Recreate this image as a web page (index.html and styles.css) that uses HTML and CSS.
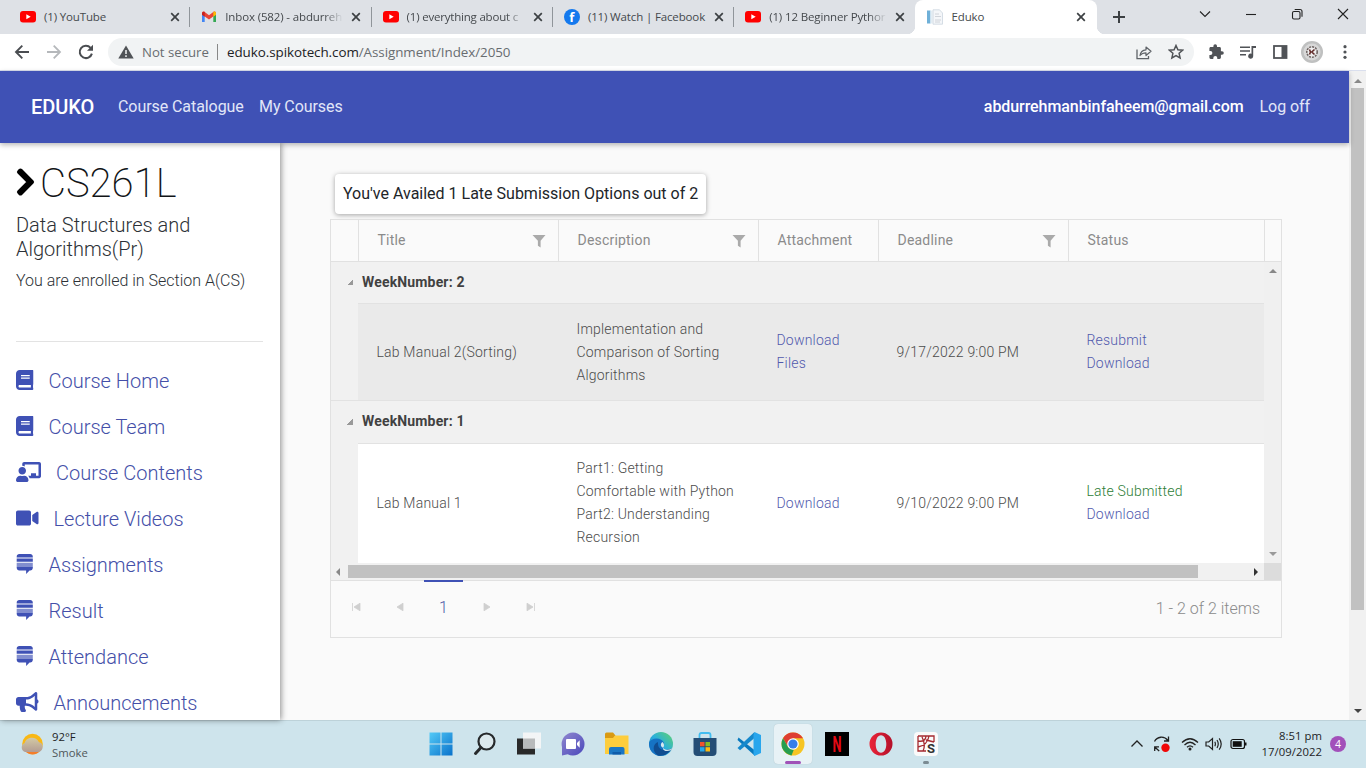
FILE: index.html
```html
<!DOCTYPE html>
<html lang="en">
<head>
<meta charset="utf-8">
<title>Eduko</title>
<link rel="stylesheet" href="styles.css">
</head>
<body>
<svg class="defs" aria-hidden="true">
  <defs>
    <symbol id="close" viewBox="0 0 10 10"><path d="M1.2 1.2l7.600 7.600M8.800 1.200l-7.600 7.600" stroke="#3c4043" stroke-width="1.700" fill="none"/></symbol>
    <symbol id="youtube" viewBox="0 0 16 12"><rect width="16" height="11.500" rx="3" fill="#f00"/><path d="M6.300 3.300l4.400 2.450-4.400 2.450z" fill="#fff"/></symbol>
    <symbol id="book" viewBox="0 0 448 512"><path d="M448 360V24c0-13.300-10.700-24-24-24H96C43 0 0 43 0 96v320c0 53 43 96 96 96h328c13.300 0 24-10.700 24-24v-16c0-7.500-3.500-14.300-8.900-18.700-4.200-15.400-4.200-59.300 0-74.700 5.400-4.300 8.900-11.100 8.900-18.600zM128 134c0-3.300 2.700-6 6-6h212c3.300 0 6 2.700 6 6v20c0 3.300-2.700 6-6 6H134c-3.300 0-6-2.700-6-6v-20zm0 64c0-3.300 2.700-6 6-6h212c3.300 0 6 2.700 6 6v20c0 3.300-2.700 6-6 6H134c-3.300 0-6-2.700-6-6v-20zm253.400 250H96c-17.700 0-32-14.300-32-32 0-17.600 14.400-32 32-32h285.400c-1.900 17.100-1.900 46.900 0 64z"/></symbol>
    <symbol id="stack" viewBox="0 0 448 512"><path d="M17.700 332.300h412.700v22c0 37.700-29.300 68-65.300 68h-19L259.300 512v-89.700H83c-36 0-65.300-30.300-65.300-68v-22zM17.700 199.300h412.700v-85H17.700v85zM365 0H83C47 0 17.700 30.300 17.700 67.700V90h412.700V67.700C430.300 30.300 401 0 365 0z"/><path d="M17.700 223.700h412.700v108.600H17.700z" opacity=".65"/></symbol>
    <symbol id="filter" viewBox="0 0 14 14"><path d="M.5 1h13L8.600 6.800V13.600L5.900 11.800V6.800z" fill="#aaa"/></symbol>
  </defs>
</svg>

<div class="screen">
  <header class="tabs">
    <div class="tab"><svg class="fav yt"><use href="#youtube"/></svg><span class="tab-name">(1) YouTube</span><svg class="x"><use href="#close"/></svg></div>
    <div class="tab"><svg class="fav" viewBox="0 0 16 16"><path d="M1 4.200v8.800h2.700V6.500z" fill="#4285f4"/><path d="M15 4.200v8.800h-2.700V6.500z" fill="#34a853"/><path d="M1 4.500c0-1.900 1.600-2.300 2.700-1.500L8 6.300 12.300 3c1.100-.8 2.700-.4 2.700 1.500v1L8 10.400 1 5.500z" fill="#ea4335"/><path d="M12.300 3c1.100-.8 2.700-.4 2.700 1.500v1.200l-2.700 2z" fill="#fbbc04"/><path d="M1 4.500C1 3 2.400 2.200 3.700 3v4.700L1 5.700z" fill="#c5221f"/></svg><span class="tab-name fade">Inbox (582) - abdurreh</span><svg class="x"><use href="#close"/></svg></div>
    <div class="tab"><svg class="fav yt"><use href="#youtube"/></svg><span class="tab-name fade tight">(1) everything about c</span><svg class="x"><use href="#close"/></svg></div>
    <div class="tab"><span class="fav fb">f</span><span class="tab-name">(11) Watch | Facebook</span><svg class="x"><use href="#close"/></svg></div>
    <div class="tab last"><svg class="fav yt"><use href="#youtube"/></svg><span class="tab-name fade">(1) 12 Beginner Pythor</span><svg class="x"><use href="#close"/></svg></div>
    <div class="tab active"><svg class="fav" viewBox="0 0 16 16"><path d="M0 1.500h3.500v13H0z" fill="#6fb0d8"/><path d="M3.500 1.500h2v13h-2z" fill="#e2edf4"/><path d="M6 .8h6.500l3 3.200v11.200H6z" fill="#f4f6f9" stroke="#cbd5de" stroke-width=".8"/><path d="M8 5h4M8 7.500h6M8 11h6M8 13h5" stroke="#c6ccd2" stroke-width=".8"/></svg><span class="tab-name">Eduko</span><svg class="x"><use href="#close"/></svg></div>
    <svg class="plus" viewBox="0 0 14 14"><path d="M7 1v12M1 7h12" stroke="#3c4043" stroke-width="2"/></svg>
    <div class="win-controls">
      <svg viewBox="0 0 12 12"><path d="M1 3.500l5 5 5-5" /></svg>
      <svg viewBox="0 0 12 12"><path d="M1 6.500h10" /></svg>
      <svg viewBox="0 0 12 12"><rect x="1.500" y="3.500" width="7.500" height="7.500" rx="1.500"/><path d="M3.700 1.500h5.300a2 2 0 0 1 2 2v5.300"/></svg>
      <svg viewBox="0 0 12 12"><path d="M1 1l10 10M11 1L1 11"/></svg>
    </div>
  </header>

  <div class="toolbar">
    <svg class="nav-ic" viewBox="0 0 16 16"><path d="M15 8H2M8.300 1.700L2 8l6.300 6.300" stroke="#4a4d51" stroke-width="1.900" fill="none"/></svg>
    <svg class="nav-ic" viewBox="0 0 16 16"><path d="M1 8h13M7.700 1.700L14 8l-6.300 6.300" stroke="#b5b8bb" stroke-width="1.800" fill="none"/></svg>
    <svg class="nav-ic" viewBox="0 0 16 16"><path d="M13.900 9.600A6.200 6.200 0 1 1 12.600 3.800" stroke="#4a4d51" stroke-width="2" fill="none"/><path d="M15 .8v6H9z" fill="#4a4d51"/></svg>
    <div class="omnibox">
      <svg class="warn" viewBox="0 0 16 14"><path d="M8 .4L15.700 13.600H.3z" fill="#505357"/><path d="M8 5v4M8 10.300v1.700" stroke="#f1f3f4" stroke-width="1.500"/></svg>
      <span class="insecure">Not secure</span><i class="url-sep"></i>
      <span class="url"><b>eduko.spikotech.com</b>/Assignment/Index/2050</span>
      <svg class="share" viewBox="0 0 16 16"><path d="M1 5.500V14.700h11.500V12" stroke="#5f6368" stroke-width="1.300" fill="none"/><path d="M4 11.500c.5-4 2.700-5.500 6-5.700V3l5 4.300-5 4.200V8.800c-2.700 0-4.500.8-6 2.700z" stroke="#5f6368" stroke-width="1.200" fill="none" stroke-linejoin="round"/></svg>
      <svg class="star" viewBox="0 0 16 16"><path d="M8 1.500l1.900 4.300 4.700.4-3.500 3.100 1 4.600L8 11.500l-4.100 2.400 1-4.600L1.400 6.200l4.700-.4z" stroke="#505357" stroke-width="1.500" fill="none"/></svg>
    </div>
    <svg class="tool first" viewBox="0 0 16 16"><path d="M14 7.200h-1.100V4.500c0-.8-.6-1.400-1.400-1.400H9V2a1.800 1.800 0 0 0-3.600 0v1.100H2.800c-.8 0-1.400.6-1.400 1.400v2.400h1a2 2 0 0 1 0 4h-1v2.700c0 .8.600 1.400 1.400 1.400h2.500v-1a2 2 0 0 1 4 0v1h2.200c.8 0 1.400-.6 1.400-1.400v-2.800H14a1.800 1.800 0 0 0 0-3.600z" fill="#505357"/></svg>
    <svg class="tool" viewBox="0 0 16 16"><path d="M0 3.200h10M0 7h10M0 10.800h6" stroke="#505357" stroke-width="1.600"/><path d="M11.500 2H16v2h-2.800v8.200a2.500 2.500 0 1 1-1.700-2.400z" fill="#505357"/></svg>
    <svg class="tool" viewBox="0 0 16 16"><rect x="2" y="2" width="12.500" height="12" fill="none" stroke="#505357" stroke-width="1.800"/><path d="M9.500 2H15v12H9.500z" fill="#505357"/></svg>
    <svg class="avatar" viewBox="0 0 22 22"><circle cx="11" cy="11" r="11" fill="#bfc0c0"/><circle cx="11" cy="11" r="8.500" fill="#d8d8d8"/><circle cx="11" cy="11" r="5.200" fill="#eee" stroke="#6a5f5d" stroke-width="1.500" stroke-dasharray="2 1"/><path d="M8.500 8.500l1 2.500-1 2.500M13.500 8.500l-2.700 2.500 2.700 2.500" stroke="#632c2a" stroke-width="1.600" fill="none"/></svg>
    <svg class="dots" viewBox="0 0 4 16"><g fill="#505357"><circle cx="2" cy="2.700" r="1.600"/><circle cx="2" cy="8" r="1.600"/><circle cx="2" cy="13.300" r="1.600"/></g></svg>
  </div>

  <div class="viewport">
    <div class="page">
      <nav class="navbar">
        <span class="brand">EDUKO</span><a class="l1">Course Catalogue</a><a class="l2">My Courses</a>
        <span class="user">abdurrehmanbinfaheem@gmail.com</span><a class="logoff">Log off</a>
      </nav>
      <div class="columns">
        <aside class="sidebar">
          <h1><svg viewBox="0 0 320 512"><path d="M285.476 272.971L91.132 467.314c-9.373 9.373-24.569 9.373-33.941 0l-22.667-22.667c-9.357-9.357-9.375-24.522-.04-33.901L188.505 256 34.484 101.255c-9.335-9.379-9.317-24.544.04-33.901l22.667-22.667c9.373-9.373 24.569-9.373 33.941 0L285.475 239.030c9.373 9.372 9.373 24.568.001 33.941z" stroke="#000" stroke-width="26"/></svg><span>CS261L</span></h1>
          <p class="course">Data Structures and<br>Algorithms(Pr)</p>
          <p class="section">You are enrolled in Section A(CS)</p>
          <div class="menu">
            <a><svg class="w17"><use href="#book"/></svg><span>Course Home</span></a>
            <a><svg class="w17"><use href="#book"/></svg><span>Course Team</span></a>
            <a><svg class="w25" viewBox="0 0 640 512"><path d="M208 352c-2.390 0-4.780.35-7.060 1.090C187.980 357.300 174.350 360 160 360c-14.350 0-27.980-2.700-40.950-6.910-2.280-.74-4.660-1.090-7.050-1.090C49.940 352-.33 402.480 0 464.620.14 490.880 21.730 512 48 512h224c26.270 0 47.860-21.120 48-47.380.33-62.140-49.940-112.620-112-112.620zm-48-32c53.020 0 96-42.980 96-96s-42.980-96-96-96-96 42.980-96 96 42.980 96 96 96zM592 0H208c-26.470 0-48 22.250-48 49.590V96c23.420 0 45.100 6.780 64 17.800V64h352v288h-64v-64H384v64h-76.240c19.100 16.690 33.120 38.730 39.690 64H592c26.470 0 48-22.250 48-49.590V49.590C640 22.250 618.470 0 592 0z"/></svg><span>Course Contents</span></a>
            <a><svg class="w22" viewBox="0 0 576 512"><path d="M336.200 64H47.800C21.400 64 0 85.400 0 111.800v288.400C0 426.600 21.400 448 47.800 448h288.400c26.400 0 47.800-21.400 47.800-47.800V111.800c0-26.400-21.400-47.800-47.800-47.800zm189.400 37.700L416 177.300v157.400l109.600 75.500c21.200 14.600 50.400-.3 50.400-25.800V127.500c0-25.400-29.100-40.400-50.400-25.800z"/></svg><span>Lecture Videos</span></a>
            <a><svg class="w17"><use href="#stack"/></svg><span>Assignments</span></a>
            <a><svg class="w17"><use href="#stack"/></svg><span>Result</span></a>
            <a><svg class="w17"><use href="#stack"/></svg><span>Attendance</span></a>
            <a><svg class="w22" viewBox="0 0 576 512"><path d="M576 240c0-23.630-12.950-44.040-32-55.120V32.010C544 23.260 537.020 0 512 0c-7.120 0-14.190 2.380-19.980 7.020l-85.030 68.030C364.280 109.190 310.660 128 256 128H64c-35.350 0-64 28.650-64 64v96c0 35.350 28.650 64 64 64h33.700c-1.390 10.480-2.180 21.140-2.180 32 0 39.770 9.260 77.350 25.560 110.940 5.190 10.690 16.520 17.060 28.400 17.060h74.280c26.050 0 41.690-29.840 25.900-50.560-16.400-21.520-26.150-48.360-26.150-77.440 0-11.110 1.620-21.790 4.410-32H256c54.660 0 108.280 18.810 150.980 52.950l85.030 68.030a32.023 32.023 0 0 0 19.980 7.020c24.920 0 32-22.780 32-32V295.130C563.050 284.040 576 263.630 576 240zm-96 141.420l-33.050-26.440C392.950 311.780 325.120 288 256 288v-96c69.120 0 136.950-23.780 190.950-66.980L480 98.580v282.840z"/></svg><span>Announcements</span></a>
          </div>
        </aside>
        <main class="main">
          <div class="notice">You've Availed 1 Late Submission Options out of 2</div>
          <section class="grid">
            <div class="cols head">
              <div></div>
              <div>Title<svg><use href="#filter"/></svg></div>
              <div>Description<svg><use href="#filter"/></svg></div>
              <div>Attachment</div>
              <div>Deadline<svg><use href="#filter"/></svg></div>
              <div>Status</div>
              <div></div>
            </div>
            <div class="body">
              <div class="rows">
                <div class="group"><i></i>WeekNumber: 2</div>
                <div class="cols row hover">
                  <div></div><div>Lab Manual 2(Sorting)</div><div>Implementation and<br>Comparison of Sorting<br>Algorithms</div><div class="link">Download<br>Files</div><div class="date">9/17/2022 9:00 PM</div><div class="link">Resubmit<br>Download</div>
                </div>
                <div class="group second"><i></i>WeekNumber: 1</div>
                <div class="cols row white">
                  <div></div><div>Lab Manual 1</div><div>Part1: Getting<br>Comfortable with Python<br>Part2: Understanding<br>Recursion</div><div class="link">Download</div><div class="date">9/10/2022 9:00 PM</div><div class="link"><span class="late">Late Submitted</span><br>Download</div>
                </div>
              </div>
              <div class="vbar"><i class="up"></i><i class="down"></i></div>
              <div class="hbar"><i class="left"></i><b></b><i class="right"></i></div>
              <div class="corner"></div>
            </div>
            <footer class="pager">
              <svg viewBox="0 0 10 10"><path d="M1.500 1v8M9 1.200v7.600L3 5z"/></svg>
              <svg viewBox="0 0 10 10"><path d="M8 1.200v7.600L2 5z"/></svg>
              <span class="current">1</span>
              <svg viewBox="0 0 10 10"><path d="M2 1.200v7.600L8 5z"/></svg>
              <svg viewBox="0 0 10 10"><path d="M8.500 1v8M1 1.200v7.600L7 5z"/></svg>
              <span class="count">1 - 2 of 2 items</span>
            </footer>
          </section>
        </main>
      </div>
    </div>
    <div class="scroll"><i class="up"></i><b></b><i class="down dark"></i></div>
  </div>

  <div class="taskbar">
    <svg class="weather" viewBox="0 0 24 22"><defs><linearGradient id="cl" x1="0" y1="0" x2="0" y2="1"><stop offset="0" stop-color="#d3c9a5"/><stop offset="1" stop-color="#b39c92"/></linearGradient></defs><circle cx="12.500" cy="11" r="10.300" fill="#f9b815"/><path d="M5 19a4.800 4.800 0 0 1-.3-9C6 4 16 2.500 19 9.300c5 .5 5 8.500-.2 9.700z" fill="url(#cl)"/><path d="M6 19h13c-3 3.200-9.500 3.200-13 0z" fill="#f47e2c"/></svg>
    <div class="wtext"><span>92°F</span><span class="smoke">Smoke</span></div>
    <div class="apps">
      <div class="app"><svg viewBox="0 0 24 24"><defs><linearGradient id="wn" gradientUnits="userSpaceOnUse" x1="0" y1="0" x2="24" y2="24"><stop offset="0" stop-color="#55ccf8"/><stop offset="1" stop-color="#0870ca"/></linearGradient></defs><path d="M.5.500h11v11H.500zM12.500.500h11v11h-11zM.500 12.500h11v11H.500zM12.500 12.500h11v11h-11z" fill="url(#wn)"/></svg></div>
      <div class="app"><svg viewBox="0 0 24 24"><circle cx="13.500" cy="9.500" r="8" fill="#dce9ed" stroke="#26292b" stroke-width="2.200"/><path d="M8 15.500L2.500 21.500" stroke="#26292b" stroke-width="3" stroke-linecap="round"/></svg></div>
      <div class="app"><svg viewBox="0 0 24 24"><path d="M0 6.500h18v16H0z" fill="#292929"/><path d="M6 .5h18v16H6z" fill="#f3f5f6"/><path d="M6 6.500h12v10H6z" fill="#b8babb"/></svg></div>
      <div class="app"><svg viewBox="0 0 24 24"><defs><linearGradient id="ch" x1="0" y1="0" x2="1" y2="1"><stop offset="0" stop-color="#9088cf"/><stop offset="1" stop-color="#4a48bb"/></linearGradient></defs><path d="M12 .5a11.500 11.500 0 1 1-5.300 21.700L1 23.400V15A11.500 11.500 0 0 1 12 .5z" fill="url(#ch)"/><rect x="5" y="7" width="10" height="10" rx="1" fill="#fff"/><path d="M16 11l2.700-2.800v7.600L16 13z" fill="#fff"/></svg></div>
      <div class="app"><svg class="wide" viewBox="0 0 26 24"><path d="M1 2q0-1.500 1.500-1.500H9l2.500 3L9 7H1z" fill="#d99a13"/><path d="M1 6h8l2-2.500h13.500V22H1z" fill="#fdcd3d"/><path d="M5 22.500v-5.500q0-2 2-2h11.500q2 0 2 2v5.500z" fill="#1b77c4"/><path d="M8.500 20h8.500v2.500h-8.500z" fill="#0f5caa"/></svg></div>
      <div class="app"><svg viewBox="0 0 24 24"><defs><linearGradient id="ed" x1="0" y1="1" x2="1" y2="0"><stop offset="0" stop-color="#1467ba"/><stop offset=".5" stop-color="#2ab0dc"/><stop offset="1" stop-color="#62d46a"/></linearGradient></defs><circle cx="12" cy="12" r="12" fill="url(#ed)"/><path d="M0 11C2 5 13 5 15 11c.5 2-1 3.200-1 4.700 1 2.700 6 2.800 8.700.8C20 22 14 24.500 9 23.500 3 22 0 17 0 11z" fill="#1673c4"/><path d="M9 23.500C3 20 3.500 12 9 10c-.5 7 4 10 13.700 6.500C20 22 14 24.500 9 23.500z" fill="#104d91"/><path d="M14 15.700c1.500-1.500 1.500-4-.5-5.700-2 1-2.500 4.500.5 5.700z" fill="#d5e8ee"/><path d="M14 15.700c2.500 3 7 2.500 10.500-.2L22 18.300c-5 2-8.500 0-8-2.600z" fill="#cfe3eb"/></svg></div>
      <div class="app"><svg viewBox="0 0 24 24"><path d="M6.500 6V3q0-2 2-2h7q2 0 2 2v3" stroke="#42bdf0" stroke-width="1.800" fill="none"/><path d="M.5 6h23v14q0 4-4 4h-15q-4 0-4-4z" fill="#244d75"/><path d="M7 10h4.500v4.300H7z" fill="#f0532d"/><path d="M12.500 10H17v4.300h-4.500z" fill="#84bd27"/><path d="M7 15.200h4.500v4.300H7z" fill="#24a8eb"/><path d="M12.500 15.200H17v4.300h-4.500z" fill="#fdbb12"/></svg></div>
      <div class="app"><svg viewBox="0 0 24 24"><path d="M1.500 5.500L18 18.500V24L.5 8z" fill="#0879be"/><path d="M17.500 0v6L3 18.200.5 16z" fill="#1689cc"/><path d="M17.500 0L24 3v18l-6.500 3-1-2V3z" fill="#28a6ed"/></svg></div>
      <div class="app selected"><svg viewBox="0 0 24 24"><circle cx="12" cy="12" r="11.500" fill="#f6c524"/><path d="M2 6.300A11.500 11.500 0 0 1 22 6.300H12L7.100 14.800z" fill="#de3e32"/><path d="M2 6.300l5.100 8.600 5.700 2.800-2.300 5.700A11.500 11.500 0 0 1 2 6.300z" fill="#279e50"/><circle cx="12" cy="12" r="5.800" fill="#fff"/><circle cx="12" cy="12" r="4.600" fill="#377ee9"/></svg></div>
      <div class="app"><svg viewBox="0 0 24 24"><rect width="24" height="24" fill="#000"/><text x="12" y="20" text-anchor="middle" textLength="9" lengthAdjust="spacingAndGlyphs" class="netflix">N</text></svg></div>
      <div class="app"><svg viewBox="0 0 24 24"><defs><linearGradient id="op" x1="0" x2="1"><stop offset="0" stop-color="#ea2438"/><stop offset="1" stop-color="#b4112a"/></linearGradient></defs><path d="M12 .5a11.500 11.500 0 1 0 0 23 11.500 11.500 0 1 0 0-23zM12 3.200c3.300 0 5.300 4 5.300 8.800s-2 8.800-5.300 8.800-5.300-4-5.300-8.800 2-8.800 5.300-8.800z" fill="url(#op)" fill-rule="evenodd"/></svg></div>
      <div class="app running"><svg viewBox="0 0 24 24"><rect width="24" height="24" rx="4" fill="#fafafa"/><path d="M4 4h16v6M4 4v15h8M4 9c5 1 8-1 8-5M4 15c6-1 10-5 11-11M9 19c2-4 1-10-1-14M12 8l8 2" stroke="#a52a30" stroke-width="1.300" fill="none"/><text x="13" y="20.500" class="spy">S</text></svg></div>
    </div>
    <div class="tray">
      <svg class="t-up" viewBox="0 0 14 14"><path d="M1.500 9.500L7 4l5.500 5.500" stroke="#222" stroke-width="1.300" fill="none"/></svg>
      <svg class="t-sync" viewBox="0 0 18 18"><path d="M1.500 6.500C4 1.500 11 .5 15 5.500M15.500 1.500v4.500h-4.500M1.700 16v-4.200h4.300M1.700 12l4.500 4" stroke="#222" stroke-width="1.300" fill="none"/><circle cx="12.500" cy="12.800" r="4.200" fill="#f00707"/></svg>
      <svg class="t-wifi" viewBox="0 0 18 14"><path d="M1 5.500Q9-2 17 5.500M3.500 8Q9 2.500 14.500 8M6 10.300Q9 7.500 12 10.300" stroke="#222" stroke-width="1.300" fill="none"/><circle cx="9" cy="12" r="1.500" fill="#222"/></svg>
      <svg class="t-vol" viewBox="0 0 18 14"><path d="M1 5h2.700L7.500 1.500v11L3.700 9H1zM9.800 4.800Q11 7 9.800 9.200M12 3q2.500 4 0 8M14.200 1.300q4 5.700 0 11.400" stroke="#222" stroke-width="1.200" fill="none"/></svg>
      <svg class="t-bat" viewBox="0 0 18 12"><rect x="1" y="1.500" width="13.500" height="9" rx="2" fill="none" stroke="#111" stroke-width="1.200"/><path d="M2.700 3.200h9v5.600h-9z" fill="#111"/><path d="M15 4.500h1.500v3H15z" fill="#111"/></svg>
      <div class="clock"><span>8:51 pm</span><span>17/09/2022</span></div>
      <span class="badge">4</span>
    </div>
  </div>
</div>
</body>
</html>
```
FILE: styles.css
```css
* { box-sizing: border-box; }
body { margin: 0; overflow: hidden; font-family: Roboto, sans-serif; }
.defs { position: absolute; width: 0; height: 0; }
.screen { width: 1366px; height: 768px; display: flex; flex-direction: column; background: #fafafa; }
svg { display: block; flex: none; }
a, span { white-space: nowrap; }

/* Browser tabs */
.tabs { height: 34px; display: flex; background: #dee1e6; padding-left: 9px; font: 11.5px/34px "Open Sans", sans-serif; color: #45494d; }
.tab { width: 181.3px; display: flex; align-items: center; padding-left: 11px; background: linear-gradient(#90959a, #90959a) right center / 1px 20px no-repeat; flex: none; }
.tab.last { background: none; }
.fav { width: 16px; height: 16px; }
.fav.yt { height: 12px; }
.fb { border-radius: 50%; background: #1479ee; color: #fff; font: bold 13px/17px "Open Sans", sans-serif; text-align: center; }
.tab-name { margin-left: 8px; width: 118px; letter-spacing: -0.14px; }
.tab-name.tight { letter-spacing: -0.2px; }
.fade { -webkit-mask-image: linear-gradient(90deg, #000 84%, transparent); mask-image: linear-gradient(90deg, #000 84%, transparent); }
.x { width: 10px; height: 10px; margin-left: 8px; }
.tab.active { background: #fff; border-radius: 8px 8px 0 0; position: relative; width: 182px; padding-left: 12px; }
.tab.active .x { margin-left: 7px; }
.tab.active::before, .tab.active::after { content: ""; position: absolute; bottom: 0; width: 8px; height: 8px; }
.tab.active::before { left: -8px; background: radial-gradient(circle at 0 0, transparent 8px, #fff 8.500px); }
.tab.active::after { right: -8px; background: radial-gradient(circle at 100% 0, transparent 8px, #fff 8.500px); }
.plus { width: 14px; height: 14px; margin: 10px 0 0 15px; }
.win-controls { display: flex; gap: 34px; margin: 8px 0 0 auto; padding-right: 17px; }
.win-controls svg { width: 12px; height: 12px; fill: none; stroke: #222; stroke-width: 1.1; }

/* Address bar */
.toolbar { height: 37px; display: flex; align-items: center; background: #fff; border-bottom: 1px solid #dadfee; padding-left: 14px; font: 13.5px/28px "Open Sans", sans-serif; }
.nav-ic { width: 16px; height: 16px; margin-right: 16px; }
.omnibox { width: 1086px; height: 28px; margin-left: -2px; border-radius: 14px; background: #f1f3f4; display: flex; align-items: center; padding: 0 10px 0 10px; color: #686c70; }
.warn { width: 16px; height: 14px; }
.insecure { margin-left: 8px; width: 68px; font-size: 13.2px; }
.url-sep { width: 1px; height: 16px; background: #888; margin: 0 9px 0 7px; }
.url { font-size: 13.4px; letter-spacing: -0.06px; }
.url b { font-weight: 400; color: #202124; }
.share { width: 16px; height: 16px; margin-left: auto; }
.star { width: 16px; height: 16px; margin-left: 16px; }
.tool { width: 16px; height: 16px; margin-left: 16px; }
.tool.first { margin-left: 14px; }
.avatar { width: 22px; height: 22px; margin-left: 13px; }
.dots { width: 4px; height: 16px; margin-left: 20px; }

/* Page area */
.viewport { height: 649px; display: flex; }
.page { width: 1349px; display: flex; flex-direction: column; }
.navbar { height: 72px; flex: none; display: flex; align-items: center; background: #3f51b5; color: #e2e6f8; padding: 0 0 2px 31px; font-size: 16px; letter-spacing: -0.07px; box-shadow: 0 2px 5px rgba(0,0,0,.28); position: relative; z-index: 2; }
.brand { font-size: 20px; font-weight: 500; color: #fff; width: 87px; letter-spacing: -0.1px; padding-top: 1px; }
.l1 { width: 141px; }
.user { margin-left: auto; color: #fff; font-weight: 500; }
.logoff { margin: 0 39px 0 16px; }
.columns { flex: 1; min-height: 0; display: flex; }
.sidebar { width: 280px; background: #fff; padding: 20px 16px 0; box-shadow: 1px 0 6px rgba(0,0,0,.45); overflow: hidden; font-weight: 300; color: #2c3136; position: relative; z-index: 1; }
h1 { margin: 0; display: flex; align-items: center; font-size: 40px; font-weight: 200; line-height: 42px; height: 42px; color: #111417; }
h1 svg { width: 19px; height: 30px; margin: -4px 5px 0 0; }
.course { margin: 8px 0 0; font-size: 20px; line-height: 24px; }
.section { margin: 8px 0 0; font-size: 16px; line-height: 24px; }
.menu { margin-top: 48px; width: 247px; border-top: 1px solid #e3e3e3; padding-top: 16px; }
.menu a { display: flex; align-items: center; height: 46px; color: #444fa8; font-size: 20px; }
.menu svg { height: 20px; fill: #3f51b5; margin: -2px 15px 0 0; }
.w17 { width: 17.5px; }
.w25 { width: 25px; }
.w22 { width: 22.5px; }

/* Assignments grid */
.main { flex: 1; padding: 31px 0 0 50px; }
.notice { width: 371px; height: 40px; margin-left: 5px; padding-left: 8px; border-radius: 4px; background: #fff; box-shadow: 0 1px 5px rgba(0,0,0,.35); font-size: 16px; line-height: 40px; color: #212529; white-space: nowrap; }
.grid { margin-top: 5px; width: 952px; height: 419px; border: 1px solid #e1e1e1; font-size: 14px; }
.cols { display: grid; grid-template-columns: 28px 200px 200px 120px 190px 196px 16px; }
.head { height: 42px; border-bottom: 1px solid #e1e1e1; color: #8b8b8b; letter-spacing: .2px; }
.head div { display: flex; align-items: center; justify-content: space-between; border-right: 1px solid #e1e1e1; padding: 0 12px 2px 18.500px; }
.head div:first-child, .head div:last-child { padding: 0; }
.head div:last-child { border-right: 0; }
.head svg { width: 14px; height: 14px; margin-top: 2px; }
.body { display: grid; grid-template: 301px 17px / 933px 17px; height: 319px; border-bottom: 1px solid #e1e1e1; }
.rows { background: #f1f1f1; overflow: hidden; }
.group { height: 41px; display: flex; align-items: center; padding-bottom: 2px; font-weight: 700; color: #414141; letter-spacing: .16px; }
.group.second { height: 42px; }
.group i { width: 6px; height: 6px; margin: 1px 9px 0 16px; background: linear-gradient(135deg, transparent 50%, #999 50%); }
.row { grid-template-columns: 27px 200px 200px 120px 190px 196px; height: 98px; font-weight: 300; line-height: 23px; color: #4c4c4c; letter-spacing: .2px; }
.row div { padding-left: 18.500px; border-top: 1px solid #e2e2e2; align-content: center; }
.row div:first-child { border: 0; background: #f1f1f1; }
.row.hover { background: #eaeaea; border-bottom: 1px solid #e2e2e2; }
.row.white { height: 120px; background: #fff; }
.row.white div { padding-bottom: 1px; }
.row .link { color: #5159ad; }
.late { color: #2c7d35; }
.vbar { background: #f0f0f0; display: flex; flex-direction: column; justify-content: space-between; align-items: center; padding: 7px 0; }
.up, .down { width: 0; height: 0; border: 4px solid transparent; border-top: 0; border-bottom-color: #888; }
.down { border: 4px solid transparent; border-bottom: 0; border-top-color: #999; }
.down.dark { border-top-color: #444; }
.hbar { background: #f1f1f1; display: flex; align-items: center; padding: 0 6px 0 5px; }
.left, .right { border: 4px solid transparent; border-left: 0; border-right-color: #888; }
.right { border: 4px solid transparent; border-right: 0; border-left-color: #333; margin-left: auto; }
.hbar b { width: 850px; height: 13px; background: #c1c1c1; margin-left: 8px; }
.corner { background: #dcdcdc; }
.pager { height: 56px; display: flex; align-items: center; padding: 0 21px 3px 20px; color: #8b8b8b; font-weight: 300; font-size: 16px; }
.pager svg { width: 10px; height: 10px; fill: #cfcfcf; stroke: #cfcfcf; stroke-width: .8; margin: -1px 34px 0 0; }
.current { width: 39px; height: 56px; margin: -1px 19px 0 -15px; border-top: 2px solid #3f51b5; color: #515ba8; line-height: 52px; text-align: center; align-self: flex-start; }
.count { margin-left: auto; padding-top: 2px; }
.scroll { width: 17px; background: #f1f1f1; display: flex; flex-direction: column; align-items: center; padding: 8px 0 7px; }
.scroll b { width: 13px; height: 522px; margin-top: 5px; background: #c1c1c1; }
.scroll .down { margin-top: auto; }

/* Taskbar */
.taskbar { height: 48px; display: flex; align-items: center; background: #cee4ec; border-top: 1px solid #bdd2d9; font-family: "Open Sans", sans-serif; font-size: 11.3px; color: #1d2325; }
.weather { width: 24px; height: 22px; margin: -2px 0 0 20px; }
.wtext { width: 376px; margin-left: 8px; display: flex; flex-direction: column; line-height: 16px; }
.smoke { color: #50575a; }
.apps { display: flex; gap: 6.050px; margin: -1px 0 0 -6px; }
.app { width: 38px; height: 40px; display: flex; align-items: center; justify-content: center; border-radius: 4px; position: relative; }
.app svg { width: 24px; height: 24px; }
.app svg.wide { width: 26px; }
.app.selected { background: #e8f2f6; box-shadow: 0 0 1px #a8bbc2; }
.app.selected::after { content: ""; position: absolute; bottom: 0; width: 16px; height: 3px; border-radius: 2px; background: #a052b8; }
.app.running::after { content: ""; position: absolute; bottom: 0; width: 6px; height: 3px; border-radius: 2px; background: #7b8b93; }
.netflix { font: bold 22px Roboto, sans-serif; fill: #e50914; }
.spy { font: bold 13px Roboto, sans-serif; fill: #333; }
.tray { margin: -2px 0 0 auto; display: flex; align-items: center; padding-right: 20px; }
.t-up { width: 14px; height: 14px; margin-right: 9px; }
.t-sync { width: 18px; height: 18px; margin-right: 10px; }
.t-wifi { width: 18px; height: 14px; margin-right: 6px; }
.t-vol { width: 18px; height: 14px; margin-right: 7px; }
.t-bat { width: 18px; height: 12px; }
.clock { display: flex; flex-direction: column; align-items: flex-end; line-height: 15.500px; width: 74px; margin-right: 8px; letter-spacing: .06px; }
.badge { width: 16px; height: 16px; border-radius: 50%; background: #a250ba; color: #fff; text-align: center; font-size: 10.500px; line-height: 16px; }
```
